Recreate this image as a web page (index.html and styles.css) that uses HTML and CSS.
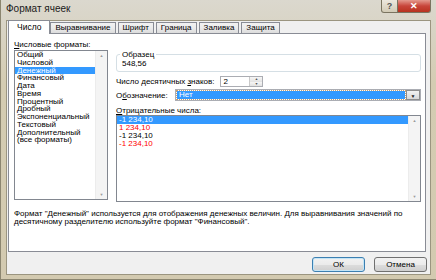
FILE: index.html
```html
<!DOCTYPE html>
<html lang="ru">
<head>
	<meta charset="UTF-8">
	<title>Формат ячеек</title>
	<link rel="stylesheet" href="styles.css">
</head>
<body>
<div class="window">
	<!-- заголовок окна -->
	<div class="titlebar">
		<span class="title">Формат ячеек</span>
		<div class="caption">
			<span class="cap help">?</span>
			<span class="cap close">✕</span>
		</div>
	</div>
	<div class="client">
		<div class="tabs">
			<span class="tab active">Число</span>
			<span class="tab">Выравнивание</span>
			<span class="tab">Шрифт</span>
			<span class="tab">Граница</span>
			<span class="tab">Заливка</span>
			<span class="tab">Защита</span>
		</div>
		<div class="panel">
			<div class="panel-body">
				<!-- левая колонка -->
				<div class="left">
					<div class="label"><u>Ч</u>исловые форматы:</div>
					<div class="listbox formats">
						<ul class="items">
							<li>Общий</li>
							<li>Числовой</li>
							<li class="sel">Денежный</li>
							<li>Финансовый</li>
							<li>Дата</li>
							<li>Время</li>
							<li>Процентный</li>
							<li>Дробный</li>
							<li>Экспоненциальный</li>
							<li>Текстовый</li>
							<li>Дополнительный</li>
							<li>(все форматы)</li>
						</ul>
						<div class="vscroll"><span class="arr">▲</span><span class="arr">▼</span></div>
					</div>
				</div>
				<!-- правая колонка -->
				<div class="right">
					<fieldset class="sample">
						<legend>Образец</legend>
						<div class="sample-value">548,56</div>
					</fieldset>
					<div class="row">
						<span class="label">Число десятичных <u>з</u>наков:</span>
						<div class="spin">
							<span class="spin-val">2</span>
							<div class="spin-btns"><span>▲</span><span>▼</span></div>
						</div>
					</div>
					<div class="row row-sym">
						<span class="label sym-label">О<u>б</u>означение:</span>
						<div class="combo">
							<span class="combo-val">Нет</span>
							<span class="combo-btn">▼</span>
						</div>
					</div>
					<div class="label neg-label"><u>О</u>трицательные числа:</div>
					<div class="listbox negs">
						<ul class="items">
							<li class="sel">-1 234,10</li>
							<li class="red">1 234,10</li>
							<li>-1 234,10</li>
							<li class="red">-1 234,10</li>
						</ul>
						<div class="vscroll"><span class="arr">▲</span><span class="arr">▼</span></div>
					</div>
				</div>
			</div>
			<p class="desc">Формат "Денежный" используется для отображения денежных величин. Для выравнивания значений по десятичному разделителю используйте формат "Финансовый".</p>
		</div>
		<div class="footer">
			<button class="btn default">ОК</button>
			<button class="btn">Отмена</button>
		</div>
	</div>
</div>
</body>
</html>
```

FILE: styles.css
```css
body {
	margin: 0;
	font-family: "Liberation Sans", Tahoma, sans-serif;
	font-size: 8px;
	color: #000;
}
.window {
	width: 436px;
	height: 280px;
	box-sizing: border-box;
	padding: 0 5px 4px 5px;
	border-left: 1px solid #8c8670;
	border-bottom: 1px solid #8c8670;
	background: linear-gradient(#dbd8ce, #d4ccb2 30%, #d3cab0);
	display: flex;
	flex-direction: column;
}
.titlebar {
	height: 20px;
	display: flex;
	align-items: flex-start;
	flex-shrink: 0;
}
.title {
	font-size: 10px;
	margin-top: 3px;
	color: #1a1a1a;
}
.caption {
	margin-left: auto;
	display: flex;
}
.cap {
	height: 13px;
	box-sizing: border-box;
	border: 1px solid #7a7460;
	border-top: none;
	display: flex;
	align-items: center;
	justify-content: center;
	font-size: 9px;
	font-weight: bold;
}
.help {
	width: 17px;
	color: #555;
	background: linear-gradient(#ece8de, #d2cbb6);
	border-radius: 0 0 0 3px;
}
.close {
	width: 33px;
	color: #fff;
	background: linear-gradient(#e49a8e, #c8453a 50%, #b8321f);
	border-left: none;
	border-radius: 0 0 3px 0;
}
.client {
	flex: 1;
	background: #f0f0f0;
	border: 1px solid #9b9580;
	padding: 0 4px 0 1px;
	display: flex;
	flex-direction: column;
}
.tabs {
	display: flex;
	align-items: flex-end;
	height: 13px;
	margin-bottom: -1px;
	position: relative;
	z-index: 1;
}
.tab {
	height: 11px;
	box-sizing: border-box;
	margin-bottom: 1px;
	margin-right: 2px;
	padding: 0 4px;
	border: 1px solid #898c95;
	border-bottom: none;
	background: linear-gradient(#f2f2f2, #ebebeb 50%, #dcdcdc);
	line-height: 10px;
	font-size: 8px;
}
.tab.active {
	height: 14px;
	margin-bottom: 0;
	margin-right: 0;
	padding: 0 8px;
	background: #fff;
	line-height: 13px;
	font-size: 8.5px;
}
.panel {
	height: 219px;
	box-sizing: border-box;
	background: #fff;
	border: 1px solid #898c95;
	padding: 6px 4px 0 5px;
}
.panel-body {
	display: flex;
	gap: 8px;
}
.label {
	line-height: 9px;
	white-space: nowrap;
}
.left {
	width: 94px;
}
.listbox {
	border: 1px solid #828790;
	background: #fff;
	display: flex;
	box-sizing: border-box;
}
.formats {
	margin-top: 1px;
	height: 150px;
}
.items {
	list-style: none;
	margin: 0;
	padding: 0;
	flex: 1;
}
.items li {
	line-height: 7.75px;
	height: 7.75px;
	padding-left: 2px;
	white-space: nowrap;
}
.negs .items li {
	line-height: 8px;
	height: 8px;
}
.items li.sel {
	background: #3399ff;
	color: #fff;
}
.items li.red {
	color: #ff0000;
}
.vscroll {
	width: 11px;
	background: #f4f4f4;
	border-left: 1px solid #ececec;
	display: flex;
	flex-direction: column;
	justify-content: space-between;
	align-items: center;
}
.arr {
	font-size: 4px;
	color: #9a9a9a;
	line-height: 9px;
}
.right {
	flex: 1;
	display: flex;
	flex-direction: column;
}
.sample {
	margin: 10px 0 0 0;
	padding: 0 5px 2px 5px;
	border: 1px solid #d5dfe5;
	border-radius: 3px;
	height: 22px;
	box-sizing: border-box;
}
.sample legend {
	padding: 0 2px;
	margin-left: -2px;
	line-height: 9px;
}
.sample-value {
	line-height: 9px;
	margin-top: 0;
}
.row {
	display: flex;
	align-items: center;
	margin-top: 4px;
}
.row-sym {
	margin-top: 2px;
}
.spin {
	margin-left: 6px;
	width: 43px;
	height: 11px;
	box-sizing: border-box;
	border: 1px solid #abadb3;
	display: flex;
}
.spin-val {
	flex: 1;
	padding-left: 2px;
	line-height: 9px;
}
.spin-btns {
	width: 12px;
	display: flex;
	flex-direction: column;
	border-left: 1px solid #c9c9c9;
}
.spin-btns span {
	flex: 1;
	font-size: 3.5px;
	line-height: 4.5px;
	text-align: center;
	color: #555;
	background: linear-gradient(#f6f6f6, #e2e2e2);
}
.sym-label {
	width: 59px;
}
.combo {
	flex: 1;
	height: 12px;
	box-sizing: border-box;
	border: 1px solid #abadb3;
	display: flex;
	padding: 1px;
}
.combo-val {
	flex: 1;
	background: #3399ff;
	color: #fff;
	padding-left: 2px;
	line-height: 8px;
	outline: 1px dotted #c8a070;
}
.combo-btn {
	width: 12px;
	margin: -1px -1px -1px 1px;
	border: 1px solid #8d8d8d;
	background: linear-gradient(#f2f2f2, #d8d8d8);
	font-size: 5px;
	line-height: 10px;
	text-align: center;
	color: #222;
}
.neg-label {
	margin-top: 5px;
}
.negs {
	height: 87px;
}
.desc {
	margin: 8px 0 0 0;
	line-height: 8px;
	width: 402px;
}
.footer {
	display: flex;
	justify-content: flex-end;
	gap: 9px;
	margin-top: 5px;
	margin-right: -1px;
}
.btn {
	width: 53px;
	height: 15px;
	padding: 0;
	font-family: "Liberation Sans", Tahoma, sans-serif;
	font-size: 8px;
	border: 1px solid #707070;
	border-radius: 3px;
	background: linear-gradient(#f2f2f2, #ebebeb 50%, #dddddd 51%, #cfcfcf);
	color: #000;
}
.btn.default {
	border-color: #3c7fb1;
	box-shadow: inset 0 0 0 1px #c4e5f6;
}
```
